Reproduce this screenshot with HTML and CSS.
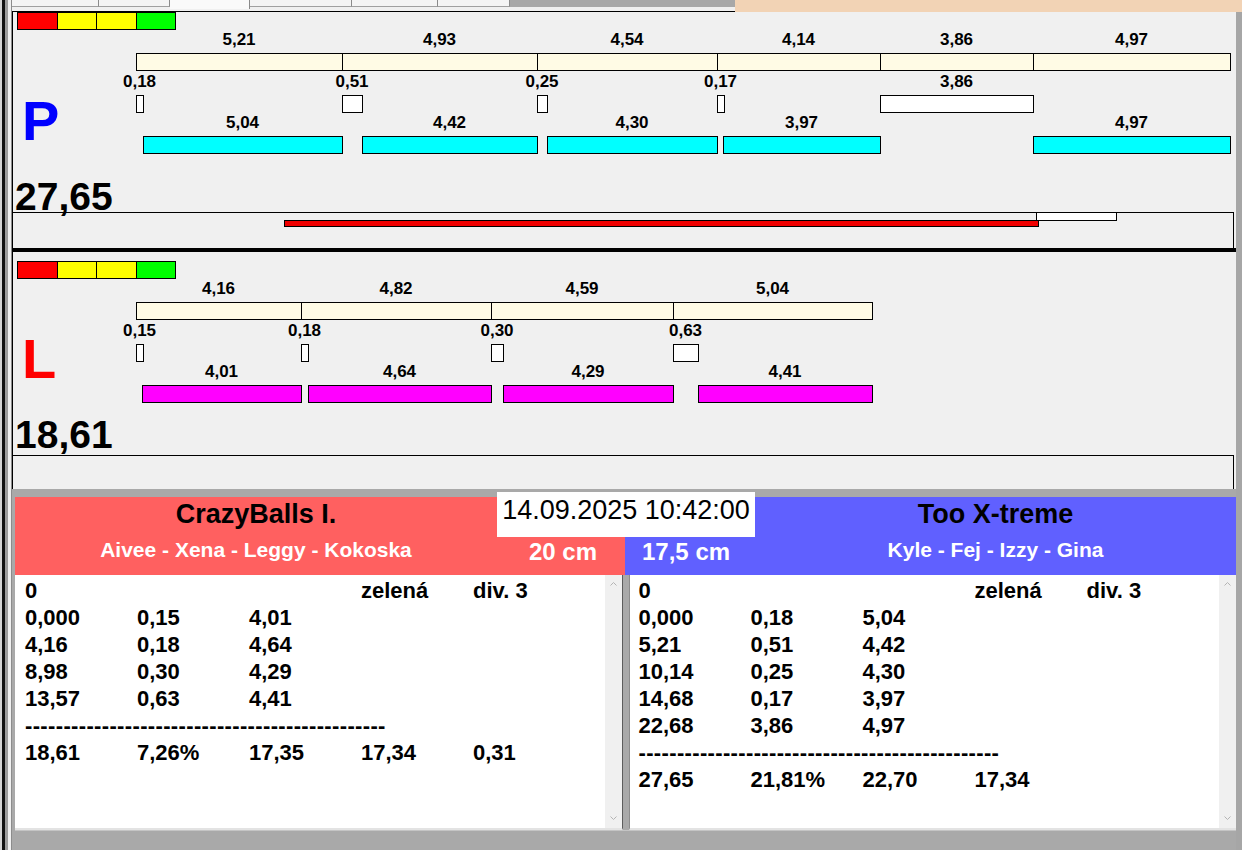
FILE: index.html
```html
<!DOCTYPE html>
<html lang="cs">
<head>
<meta charset="UTF-8">
<title>Závod</title>
<link rel="stylesheet" href="styles.css">
</head>
<body>
<div class="frame-left"></div>

<div class="window">
    <div class="tabs">
        <div class="tab-strip">
            <span class="tab"></span>
            <span class="tab"></span>
            <span class="tab active"></span>
            <span class="tab"></span>
            <span class="tab"></span>
            <span class="tab"></span>
            <span class="tab-rest"></span>
        </div>
        <div class="tab-fill"></div>
    </div>

    <section class="lane lane-p">
        <div class="tiles"><i class="red"></i><i class="yellow"></i><i class="yellow"></i><i class="green"></i></div>
        <div class="chart" id="chartP"></div>
        <div class="total">27,65</div>
        <div class="track">
            <span class="mark-white"></span>
            <span class="mark-red"></span>
        </div>
        <div class="letter">P</div>
    </section>

    <div class="divider"></div>

    <section class="lane lane-l">
        <div class="tiles"><i class="red"></i><i class="yellow"></i><i class="yellow"></i><i class="green"></i></div>
        <div class="chart" id="chartL"></div>
        <div class="total">18,61</div>
        <div class="track"></div>
        <div class="letter">L</div>
    </section>

    <div class="bottom">
        <div class="teams">
            <div class="team team-red">
                <div class="team-name">CrazyBalls I.</div>
                <div class="team-members">Aivee - Xena - Leggy - Kokoska</div>
            </div>
            <div class="mid">
                <div class="date">14.09.2025 10:42:00</div>
                <div class="cm-row">
                    <div class="cm cm-red">20 cm</div>
                    <div class="cm cm-blue">17,5 cm</div>
                </div>
            </div>
            <div class="team team-blue">
                <div class="team-name">Too X-treme</div>
                <div class="team-members">Kyle - Fej - Izzy - Gina</div>
            </div>
        </div>

        <div class="lists">
            <div class="list list-left">
                <div class="list-body">
                    <span>0</span><span></span><span></span><span>zelená</span><span>div. 3</span>
                    <span>0,000</span><span>0,15</span><span>4,01</span><span></span><span></span>
                    <span>4,16</span><span>0,18</span><span>4,64</span><span></span><span></span>
                    <span>8,98</span><span>0,30</span><span>4,29</span><span></span><span></span>
                    <span>13,57</span><span>0,63</span><span>4,41</span><span></span><span></span>
                    <span class="dash">-----------------------------------------------</span>
                    <span>18,61</span><span>7,26%</span><span>17,35</span><span>17,34</span><span>0,31</span>
                </div>
                <div class="scrollbar">
                    <svg width="7" height="4" viewBox="0 0 7 4"><polyline points="0.5,3.5 3.5,0.5 6.5,3.5" fill="none" stroke="#b4b4b4"/></svg>
                    <svg width="7" height="4" viewBox="0 0 7 4"><polyline points="0.5,0.5 3.5,3.5 6.5,0.5" fill="none" stroke="#b4b4b4"/></svg>
                </div>
            </div>
            <div class="list list-right">
                <div class="list-body">
                    <span>0</span><span></span><span></span><span>zelená</span><span>div. 3</span>
                    <span>0,000</span><span>0,18</span><span>5,04</span><span></span><span></span>
                    <span>5,21</span><span>0,51</span><span>4,42</span><span></span><span></span>
                    <span>10,14</span><span>0,25</span><span>4,30</span><span></span><span></span>
                    <span>14,68</span><span>0,17</span><span>3,97</span><span></span><span></span>
                    <span>22,68</span><span>3,86</span><span>4,97</span><span></span><span></span>
                    <span class="dash">-----------------------------------------------</span>
                    <span>27,65</span><span>21,81%</span><span>22,70</span><span>17,34</span><span></span>
                </div>
                <div class="scrollbar">
                    <svg width="7" height="4" viewBox="0 0 7 4"><polyline points="0.5,3.5 3.5,0.5 6.5,3.5" fill="none" stroke="#b4b4b4"/></svg>
                    <svg width="7" height="4" viewBox="0 0 7 4"><polyline points="0.5,0.5 3.5,3.5 6.5,0.5" fill="none" stroke="#b4b4b4"/></svg>
                </div>
            </div>
        </div>

        <div class="status"></div>
    </div>
</div>

<div class="frame-right"></div>

<script>
// 1 unit of time = SCALE px, lane drawing starts at ORIGIN (page x)
const SCALE = 39.55, ORIGIN = 136, PAD = 13;
const px = u => Math.round(ORIGIN + u * SCALE);
const fmt = v => v.toFixed(2).replace('.', ',');

const lanes = {
    chartP: {
        laps: [5.21, 4.93, 4.54, 4.14, 3.86, 4.97],
        gaps: [[0, 0.18], [5.21, 0.51], [10.14, 0.25], [14.68, 0.17], [18.82, 3.86]],
        runs: [[0.18, 5.04], [5.72, 4.42], [10.39, 4.30], [14.85, 3.97], [22.68, 4.97]],
        runClass: 'seg-run-p'
    },
    chartL: {
        laps: [4.16, 4.82, 4.59, 5.04],
        gaps: [[0, 0.15], [4.16, 0.18], [8.98, 0.30], [13.57, 0.63]],
        runs: [[0.15, 4.01], [4.34, 4.64], [9.28, 4.29], [14.20, 4.41]],
        runClass: 'seg-run-l'
    }
};

function row(parent, cls) {
    const r = document.createElement('div');
    r.className = 'row ' + cls;
    parent.appendChild(r);
    return r;
}

function box(parent, x0, x1, cls) {
    const b = document.createElement('div');
    b.className = 'seg ' + cls;
    b.style.left = (x0 - PAD) + 'px';
    b.style.width = (x1 - x0 + 1) + 'px';
    parent.appendChild(b);
}

function label(parent, center, text) {
    const l = document.createElement('span');
    l.className = 'lbl';
    l.textContent = text;
    l.style.left = (center - PAD) + 'px';
    parent.appendChild(l);
}

for (const id in lanes) {
    const lane = lanes[id];
    const chart = document.getElementById(id);

    const lapLabels = row(chart, 'row-label');
    const lapBars = row(chart, 'row-bar');
    let start = 0;
    lane.laps.forEach(lap => {
        const x0 = px(start), x1 = px(start + lap);
        label(lapLabels, (x0 + x1) / 2, fmt(lap));
        box(lapBars, x0, x1, 'seg-lap');
        start += lap;
    });

    const gapLabels = row(chart, 'row-label gap');
    const gapBars = row(chart, 'row-bar');
    lane.gaps.forEach(([s, g]) => {
        const x0 = px(s), x1 = x0 + Math.max(7, Math.round(g * SCALE));
        label(gapLabels, (x0 + x1) / 2, fmt(g));
        box(gapBars, x0, x1, 'seg-gap');
    });

    const runLabels = row(chart, 'row-label');
    const runBars = row(chart, 'row-bar');
    lane.runs.forEach(([s, len]) => {
        const x0 = px(s), x1 = px(s + len);
        label(runLabels, (x0 + x1) / 2, fmt(len));
        box(runBars, x0, x1, lane.runClass);
    });
}
</script>
</body>
</html>
```

FILE: styles.css
```css
* {
    box-sizing: border-box;
}

html, body {
    margin: 0;
}

body {
    width: 1242px;
    height: 850px;
    overflow: hidden;
    display: flex;
    background: #f0f0f0;
    font-family: "Liberation Sans", Arial, sans-serif;
    color: #000;
}

.frame-left {
    width: 12px;
    flex: none;
    background: linear-gradient(to right, #d4d4d4 0 2px, #111 2px 5px, #9c9c9c 5px 8px, #f0f0f0 8px 11px, #8c8c8c 11px 12px);
}

.frame-right {
    width: 6px;
    flex: none;
    background: linear-gradient(#f2d3b5 0 12px, #a6a6a6 12px);
}

.window {
    flex: 1;
    min-width: 0;
    display: flex;
    flex-direction: column;
}

/* tab strip */
.tabs {
    display: flex;
    height: 12px;
    flex: none;
}

.tab-strip {
    width: 723px;
    display: flex;
    align-items: flex-start;
    background: #f0f0f0;
    border-bottom: 1px solid #000;
}

.tab {
    height: 7px;
    background: #f4f4f4;
    border-right: 1px solid #8a8a8a;
    border-bottom: 1px solid #a0a0a0;
}

.tab:nth-child(1) { width: 87px; }
.tab:nth-child(2) { width: 71px; }
.tab:nth-child(3) { width: 80px; }
.tab:nth-child(4) { width: 102px; }
.tab:nth-child(5) { width: 86px; }
.tab:nth-child(6) { width: 72px; }

.tab.active {
    height: 9px;
    background: #fafafa;
    border-bottom: none;
}

.tab-rest {
    flex: 1;
    height: 7px;
    background: #a8a8a8;
}

.tab-fill {
    flex: 1;
    background: #f2d3b5;
}

/* lanes */
.lane {
    position: relative;
    flex: none;
    border-left: 1px solid #000;
}

.lane-p {
    height: 236px;
}

.lane-l {
    height: 237px;
    padding-top: 9px;
}

.divider {
    height: 4px;
    flex: none;
    background: #000;
}

.tiles {
    display: flex;
    height: 18px;
    margin-left: 4px;
}

.tiles i {
    height: 18px;
    border: 1px solid #000;
    border-left: none;
}

.tiles i:nth-child(1) { width: 41px; border-left: 1px solid #000; }
.tiles i:nth-child(2) { width: 39px; }
.tiles i:nth-child(3) { width: 40px; }
.tiles i:nth-child(4) { width: 39px; }

.tiles .red { background: #ff0000; }
.tiles .yellow { background: #ffff00; }
.tiles .green { background: #00ff00; }

.row {
    position: relative;
}

.row-label {
    height: 23px;
}

.row-label.gap {
    height: 24px;
}

.row-bar {
    height: 18px;
}

.lbl {
    position: absolute;
    top: 0;
    transform: translateX(-50%);
    font-size: 17px;
    font-weight: bold;
    line-height: 20px;
    white-space: nowrap;
}

.row-label.gap .lbl {
    top: 1px;
}

.seg {
    position: absolute;
    top: 0;
    height: 18px;
    border: 1px solid #000;
}

.seg-lap { background: #fffbe5; }
.seg-gap { background: #fff; }
.seg-run-p { background: #00ffff; }
.seg-run-l { background: #ff00ff; }

.total {
    height: 30px;
    margin-top: 28px;
    padding-left: 2px;
    font-size: 39px;
    font-weight: bold;
    line-height: 30px;
}

.lane-l .total {
    margin-top: 17px;
}

.track {
    position: relative;
    height: 36px;
    margin-right: 2px;
    border-top: 1px solid #000;
    border-right: 1px solid #000;
}

.lane-l .track {
    height: 34px;
    margin-top: 5px;
}

.mark-white {
    position: absolute;
    top: -1px;
    left: 1023px;
    width: 81px;
    height: 9px;
    background: #fff;
    border: 1px solid #000;
}

.mark-red {
    position: absolute;
    top: 7px;
    left: 271px;
    width: 755px;
    height: 7px;
    background: #f00000;
    border: 1px solid #000;
}

.letter {
    position: absolute;
    left: 9px;
    font-size: 56px;
    font-weight: bold;
    line-height: 56px;
}

.lane-p .letter {
    top: 81px;
    color: #0000ff;
}

.lane-l .letter {
    top: 79px;
    color: #ff0000;
}

/* bottom: teams and results */
.bottom {
    flex: 1;
    display: flex;
    flex-direction: column;
    padding: 8px 0 0 3px;
    background: #a9a9a9;
}

.teams {
    display: flex;
    height: 78px;
    flex: none;
}

.team {
    display: flex;
    flex-direction: column;
    align-items: center;
}

.team-red {
    width: 482px;
    background: #ff6060;
}

.team-blue {
    flex: 1;
    background: #6060ff;
}

.team-name {
    font-size: 27px;
    font-weight: bold;
    line-height: 34px;
}

.team-members {
    color: #fff;
    font-size: 21px;
    font-weight: bold;
    line-height: 37px;
}

.mid {
    width: 258px;
    height: 83px;
    margin-top: -5px;
    align-self: flex-start;
    display: flex;
    flex-direction: column;
}

.date {
    height: 45px;
    background: #fff;
    font-size: 27px;
    line-height: 36px;
    text-align: center;
}

.cm-row {
    flex: 1;
    display: flex;
}

.cm {
    color: #fff;
    font-size: 24px;
    font-weight: bold;
    line-height: 30px;
}

.cm-red {
    width: 128px;
    padding-right: 28px;
    text-align: right;
    background: #ff6060;
}

.cm-blue {
    flex: 1;
    padding-left: 17px;
    background: #6060ff;
}

.lists {
    display: flex;
    gap: 6px;
    height: 255px;
    flex: none;
}

.list {
    flex: 1;
    display: flex;
    background: #fff;
    border-bottom: 2px solid #e3e3e3;
}

.list-left {
    border-right: 1px solid #5c5c5c;
}

.list-right {
    border-left: 1px solid #8c8c8c;
}

.list-body {
    flex: 1;
    display: grid;
    grid-template-columns: repeat(5, 112px);
    grid-auto-rows: 27px;
    align-content: start;
    padding: 2px 0 0 10px;
    font-size: 22px;
    font-weight: bold;
    line-height: 27px;
    white-space: nowrap;
}

.list-right .list-body {
    padding-left: 9px;
}

.list-body .dash {
    grid-column: 1 / -1;
    letter-spacing: 0.35px;
}

.scrollbar {
    width: 17px;
    flex: none;
    display: flex;
    flex-direction: column;
    justify-content: space-between;
    align-items: center;
    padding: 7px 0 8px;
    background: #f0f0f0;
}

.scrollbar svg {
    display: block;
}

.status {
    flex: 1;
    border-top: 1px solid #c4c4c4;
}
```
